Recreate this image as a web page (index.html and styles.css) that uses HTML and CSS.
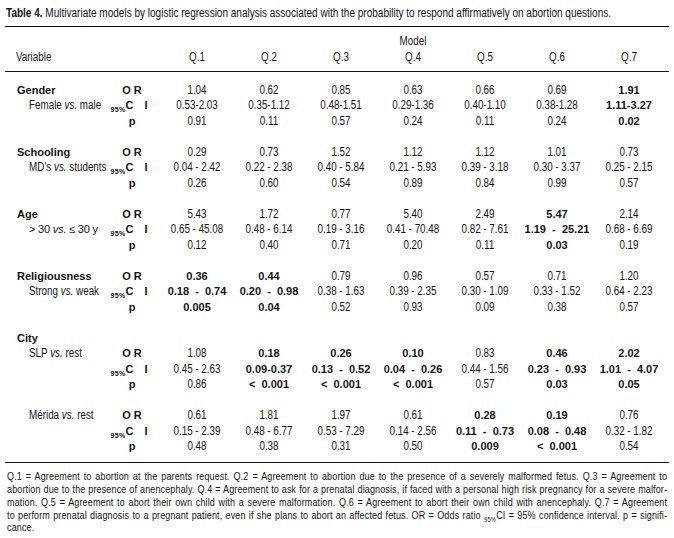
FILE: index.html
```html
<!DOCTYPE html>
<html lang="en">
<head>
<meta charset="utf-8">
<title>Table 4</title>
<link rel="stylesheet" href="styles.css">
</head>
<body>
<div class="page">
  <p class="title"><span class="n"><b>Table 4.</b> Multivariate models by logistic regression analysis associated with the probability to respond affirmatively on abortion questions.</span></p>

  <div class="table">
    <div class="thead">
      <div class="row">
        <span></span><span></span><span></span><span></span><span></span>
        <span class="num">Model</span>
        <span></span><span></span><span></span>
      </div>
      <div class="row">
        <span class="var"><span class="n">Variable</span></span><span></span>
        <span class="num">Q.1</span><span class="num">Q.2</span><span class="num">Q.3</span><span class="num">Q.4</span><span class="num">Q.5</span><span class="num">Q.6</span><span class="num">Q.7</span>
      </div>
    </div>

    <div class="tbody">
      <div class="group">
        <div class="row">
          <span class="lab-b">Gender</span><span class="stat">O R</span>
          <span class="num">1.04</span><span class="num">0.62</span><span class="num">0.85</span><span class="num">0.63</span><span class="num">0.66</span><span class="num">0.69</span><span class="num b">1.91</span>
        </div>
        <div class="row">
          <span class="lab-s"><span class="n">Female <i>vs.</i> male</span></span><span class="stat ci"><sub>95%</sub>C I</span>
          <span class="num">0.53-2.03</span><span class="num">0.35-1.12</span><span class="num">0.48-1.51</span><span class="num">0.29-1.36</span><span class="num">0.40-1.10</span><span class="num">0.38-1.28</span><span class="num b">1.11-3.27</span>
        </div>
        <div class="row">
          <span></span><span class="stat">p</span>
          <span class="num">0.91</span><span class="num">0.11</span><span class="num">0.57</span><span class="num">0.24</span><span class="num">0.11</span><span class="num">0.24</span><span class="num b">0.02</span>
        </div>
      </div>

      <div class="group">
        <div class="row">
          <span class="lab-b">Schooling</span><span class="stat">O R</span>
          <span class="num">0.29</span><span class="num">0.73</span><span class="num">1.52</span><span class="num">1.12</span><span class="num">1.12</span><span class="num">1.01</span><span class="num">0.73</span>
        </div>
        <div class="row">
          <span class="lab-s"><span class="n">MD’s <i>vs.</i> students</span></span><span class="stat ci"><sub>95%</sub>C I</span>
          <span class="num">0.04 - 2.42</span><span class="num">0.22 - 2.38</span><span class="num">0.40 - 5.84</span><span class="num">0.21 - 5.93</span><span class="num">0.39 - 3.18</span><span class="num">0.30 - 3.37</span><span class="num">0.25 - 2.15</span>
        </div>
        <div class="row">
          <span></span><span class="stat">p</span>
          <span class="num">0.26</span><span class="num">0.60</span><span class="num">0.54</span><span class="num">0.89</span><span class="num">0.84</span><span class="num">0.99</span><span class="num">0.57</span>
        </div>
      </div>

      <div class="group">
        <div class="row">
          <span class="lab-b">Age</span><span class="stat">O R</span>
          <span class="num">5.43</span><span class="num">1.72</span><span class="num">0.77</span><span class="num">5.40</span><span class="num">2.49</span><span class="num b">5.47</span><span class="num">2.14</span>
        </div>
        <div class="row">
          <span class="lab-s wide">&gt; 30 <i>vs.</i> ≤ 30 y</span><span class="stat ci"><sub>95%</sub>C I</span>
          <span class="num">0.65 - 45.08</span><span class="num">0.48 - 6.14</span><span class="num">0.19 - 3.16</span><span class="num">0.41 - 70.48</span><span class="num">0.82 - 7.61</span><span class="num b">1.19&nbsp; - &nbsp;25.21</span><span class="num">0.68 - 6.69</span>
        </div>
        <div class="row">
          <span></span><span class="stat">p</span>
          <span class="num">0.12</span><span class="num">0.40</span><span class="num">0.71</span><span class="num">0.20</span><span class="num">0.11</span><span class="num b">0.03</span><span class="num">0.19</span>
        </div>
      </div>

      <div class="group">
        <div class="row">
          <span class="lab-b">Religiousness</span><span class="stat">O R</span>
          <span class="num b">0.36</span><span class="num b">0.44</span><span class="num">0.79</span><span class="num">0.96</span><span class="num">0.57</span><span class="num">0.71</span><span class="num">1.20</span>
        </div>
        <div class="row">
          <span class="lab-s"><span class="n">Strong <i>vs.</i> weak</span></span><span class="stat ci"><sub>95%</sub>C I</span>
          <span class="num b">0.18&nbsp; - &nbsp;0.74</span><span class="num b">0.20&nbsp; - &nbsp;0.98</span><span class="num">0.38 - 1.63</span><span class="num">0.39 - 2.35</span><span class="num">0.30 - 1.09</span><span class="num">0.33 - 1.52</span><span class="num">0.64 - 2.23</span>
        </div>
        <div class="row">
          <span></span><span class="stat">p</span>
          <span class="num b">0.005</span><span class="num b">0.04</span><span class="num">0.52</span><span class="num">0.93</span><span class="num">0.09</span><span class="num">0.38</span><span class="num">0.57</span>
        </div>
      </div>

      <div class="group">
        <div class="row">
          <span class="lab-b">City</span><span></span>
          <span></span><span></span><span></span><span></span><span></span><span></span><span></span>
        </div>
        <div class="row">
          <span class="lab-s"><span class="n">SLP <i>vs.</i> rest</span></span><span class="stat">O R</span>
          <span class="num">1.08</span><span class="num b">0.18</span><span class="num b">0.26</span><span class="num b">0.10</span><span class="num">0.83</span><span class="num b">0.46</span><span class="num b">2.02</span>
        </div>
        <div class="row">
          <span></span><span class="stat ci"><sub>95%</sub>C I</span>
          <span class="num">0.45 - 2.63</span><span class="num b">0.09-0.37</span><span class="num b">0.13&nbsp; - &nbsp;0.52</span><span class="num b">0.04&nbsp; - &nbsp;0.26</span><span class="num">0.44 - 1.56</span><span class="num b">0.23&nbsp; - &nbsp;0.93</span><span class="num b">1.01&nbsp; - &nbsp;4.07</span>
        </div>
        <div class="row">
          <span></span><span class="stat">p</span>
          <span class="num">0.86</span><span class="num b">&lt;&nbsp; 0.001</span><span class="num b">&lt;&nbsp; 0.001</span><span class="num b">&lt;&nbsp; 0.001</span><span class="num">0.57</span><span class="num b">0.03</span><span class="num b">0.05</span>
        </div>
      </div>

      <div class="group">
        <div class="row">
          <span class="lab-s"><span class="n">Mérida <i>vs.</i> rest</span></span><span class="stat">O R</span>
          <span class="num">0.61</span><span class="num">1.81</span><span class="num">1.97</span><span class="num">0.61</span><span class="num b">0.28</span><span class="num b">0.19</span><span class="num">0.76</span>
        </div>
        <div class="row">
          <span></span><span class="stat ci"><sub>95%</sub>C I</span>
          <span class="num">0.15 - 2.39</span><span class="num">0.48 - 6.77</span><span class="num">0.53 - 7.29</span><span class="num">0.14 - 2.56</span><span class="num b">0.11&nbsp; - &nbsp;0.73</span><span class="num b">0.08&nbsp; - &nbsp;0.48</span><span class="num">0.32 - 1.82</span>
        </div>
        <div class="row">
          <span></span><span class="stat">p</span>
          <span class="num">0.48</span><span class="num">0.38</span><span class="num">0.31</span><span class="num">0.50</span><span class="num b">0.009</span><span class="num b">&lt;&nbsp; 0.001</span><span class="num">0.54</span>
        </div>
      </div>
    </div>
  </div>

  <div class="note">
    <span class="line">Q.1 = Agreement to abortion at the parents request. Q.2 = Agreement to abortion due to the presence of a severely malformed fetus. Q.3 = Agreement to</span>
    <span class="line">abortion due to the presence of anencephaly. Q.4 = Agreement to ask for a prenatal diagnosis, if faced with a personal high risk pregnancy for a severe malfor-</span>
    <span class="line">mation. Q.5 = Agreement to abort their own child with a severe malformation. Q.6 = Agreement to abort their own child with anencephaly. Q.7 = Agreement</span>
    <span class="line">to perform prenatal diagnosis to a pregnant patient, even if she plans to abort an affected fetus. OR = Odds ratio <sub>95%</sub>CI = 95% confidence interval. p = signifi-</span>
    <span class="last">cance.</span>
  </div>
</div>
</body>
</html>
```

FILE: styles.css
```css
html, body {
  margin: 0;
  padding: 0;
  background: #ffffff;
}

body {
  color: #141414;
  font-family: "Liberation Sans", Arial, sans-serif;
  font-size: 12px;
  overflow: hidden;
}

.page {
  width: 664px;
  padding: 5px 5px 0 5px;
}

/* condensed look: Arial glyphs narrowed like Arial Narrow */
.n {
  display: inline-block;
  transform: scaleX(0.82);
  transform-origin: left center;
}

.title {
  margin: 0 0 5px 1px;
  height: 16px;
  line-height: 16px;
  font-size: 12px;
  white-space: nowrap;
  overflow: hidden;
}

.title .n {
  transform: scaleX(0.835);
}

.table {
  width: 664px;
}

.thead {
  border-top: 1px solid #111;
  border-bottom: 1px solid #111;
  padding: 7.25px 0 5.25px 0;
}

.tbody {
  border-bottom: 1px solid #111;
  padding: 11.25px 0 7.5px 0;
}

.row {
  display: grid;
  grid-template-columns: 103px 53px repeat(7, 72px);
  height: 15.5px;
  line-height: 15.5px;
  white-space: nowrap;
}

.group + .group {
  margin-top: 15.5px;
}

.var {
  padding-left: 11px;
}

.lab-b {
  padding-left: 12px;
  font-weight: bold;
  font-size: 11px;
}

.lab-s {
  padding-left: 24px;
}

.lab-s.wide {
  font-size: 11px;
  letter-spacing: -0.2px;
}

.stat {
  padding-right: 5px;
  text-align: center;
  font-weight: bold;
  font-size: 11px;
}

.stat.ci {
  padding-right: 11px;
  word-spacing: 8px;
}

.stat sub,
.note sub {
  font-size: 7px;
  letter-spacing: 0.3px;
  word-spacing: 0;
  vertical-align: -3px;
  line-height: 0;
}

.num {
  text-align: center;
  transform: scaleX(0.82);
  transform-origin: center center;
}

.num.b {
  transform: none;
  font-weight: bold;
  font-size: 11px;
}

.note {
  margin: 7px 2px 0 2px;
  width: 660px;
  font-size: 11px;
  line-height: 12.8px;
  overflow: hidden;
}

.note .line,
.note .last {
  display: block;
  width: 805px;
  white-space: nowrap;
  transform: scaleX(0.82);
  transform-origin: left top;
  letter-spacing: 0.15px;
}

.note .line {
  text-align: justify;
  text-align-last: justify;
}
```
